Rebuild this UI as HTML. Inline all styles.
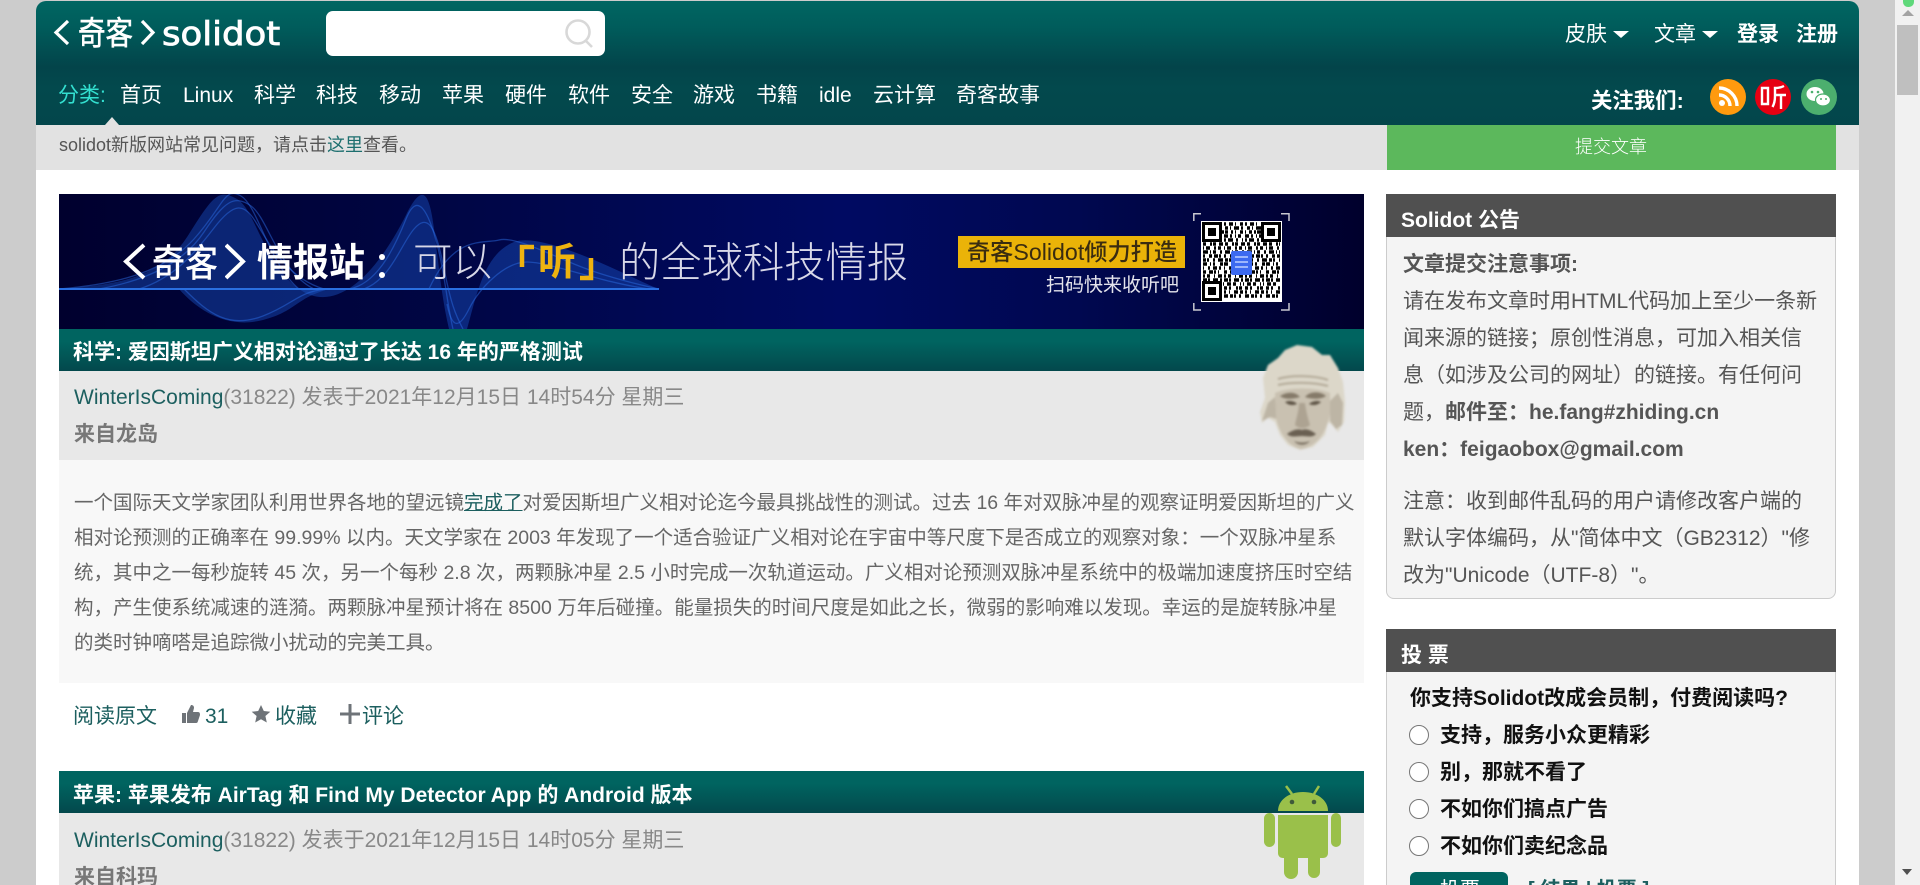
<!DOCTYPE html>
<html lang="zh-CN">
<head>
<meta charset="utf-8">
<title>solidot</title>
<style>
html,body{margin:0;padding:0;width:1920px;height:885px;overflow:hidden;background:#ccc}
body{position:relative;font-family:"Liberation Sans","Noto Sans CJK SC",sans-serif;color:#555}
.a{position:absolute}
.t{position:absolute;white-space:nowrap;line-height:30px;height:30px}
.w{color:#fff}.b{font-weight:bold}
.nav{font-size:21px;color:#fff;top:81px}
.ttl{font-size:21px;font-weight:bold;color:#fff;left:73px}
.meta{font-size:21px;color:#888;left:74px}
.meta span{color:#1c5f5f}
.src{font-size:21px;font-weight:bold;color:#777;left:74px}
.art{font-size:19.5px;color:#666;left:74px}
.art u{color:#1c5f5f}
.ac{font-size:21px;color:#1c5f5f;top:702px}
.r{font-size:21px;color:#555;left:1403px}
.v{font-size:21px;font-weight:bold;color:#111}
.radio{position:absolute;left:1410px;width:18px;height:18px;border:1px solid #767676;border-radius:50%;background:#fff}
.bar{background:linear-gradient(#006460 0,#006460 30%,#03484c 100%)}
</style>
</head>
<body>
<!-- page wrap -->
<div class="a" style="left:36px;top:170px;width:1823px;height:715px;background:#fff"></div>
<!-- scrollbar -->
<div class="a" style="left:1895px;top:0;width:25px;height:885px;background:#f1f1f1"></div>
<div class="a" style="left:1897px;top:25px;width:21px;height:70px;background:#bfbfbf"></div>
<div class="a" style="left:1903px;top:0;width:11px;height:7px;background:#5fd87a;border-radius:0 0 5px 5px"></div>
<div class="a" style="left:1902px;top:10px;width:0;height:0;border-left:6px solid transparent;border-right:6px solid transparent;border-bottom:6px solid #a3a3a3"></div>
<div class="a" style="left:1902px;top:869px;width:0;height:0;border-left:5px solid transparent;border-right:5px solid transparent;border-top:6px solid #505050"></div>

<!-- header -->
<div class="a" style="left:36px;top:1px;width:1823px;height:66px;border-radius:10px 10px 0 0;background:linear-gradient(#006662 0,#005c5b 40%,#03444a 100%)"></div>
<div class="a" style="left:36px;top:67px;width:1823px;height:58px;background:linear-gradient(#03444a 0,#03494d 35%,#03464b 100%)"></div>

<!-- logo -->
<svg class="a" style="left:50px;top:5px" width="240" height="55" fill="none" stroke="#fff" stroke-width="3.200"><path d="M18 16L6 27.500 18 39"/><path d="M92 16L103 27.500 92 39"/></svg>
<div class="t w" style="left:78px;top:14px;font-size:27.500px;line-height:40px;height:40px;-webkit-text-stroke:.5px #fff;transform:scaleY(1.18);transform-origin:left center">奇客</div>
<div class="t w" style="left:162px;top:13px;font-size:35.500px;line-height:44px;height:44px;font-family:'DejaVu Sans','Liberation Sans',sans-serif;-webkit-text-stroke:.9px #fff;transform:scaleY(.92);transform-origin:left center">solidot</div>

<!-- search -->
<div class="a" style="left:326px;top:11px;width:279px;height:45px;background:#fff;border-radius:7px"></div>
<svg class="a" style="left:562px;top:18px" width="34" height="32" fill="none" stroke="#d8d8d8" stroke-width="2.600"><circle cx="16" cy="14" r="11.500"/><path d="M24 23l6 6"/></svg>

<!-- top right -->
<div class="t w" style="left:1565px;top:20px;font-size:21px">皮肤</div>
<div class="a" style="left:1613px;top:31px;width:0;height:0;border-left:8px solid transparent;border-right:8px solid transparent;border-top:7px solid #fff"></div>
<div class="t w" style="left:1654px;top:20px;font-size:21px">文章</div>
<div class="a" style="left:1702px;top:31px;width:0;height:0;border-left:8px solid transparent;border-right:8px solid transparent;border-top:7px solid #fff"></div>
<div class="t w b" style="left:1737px;top:20px;font-size:21px">登录</div>
<div class="t w b" style="left:1796px;top:20px;font-size:21px">注册</div>

<!-- nav -->
<div class="t nav" style="left:58px;color:#33e0d0">分类:</div>
<div class="t nav" style="left:120px">首页</div>
<div class="t nav" style="left:183px">Linux</div>
<div class="t nav" style="left:254px">科学</div>
<div class="t nav" style="left:316px">科技</div>
<div class="t nav" style="left:379px">移动</div>
<div class="t nav" style="left:442px">苹果</div>
<div class="t nav" style="left:505px">硬件</div>
<div class="t nav" style="left:568px">软件</div>
<div class="t nav" style="left:631px">安全</div>
<div class="t nav" style="left:693px">游戏</div>
<div class="t nav" style="left:756px">书籍</div>
<div class="t nav" style="left:819px">idle</div>
<div class="t nav" style="left:873px">云计算</div>
<div class="t nav" style="left:956px">奇客故事</div>
<div class="a" style="left:105px;top:117px;width:0;height:0;border-left:7px solid transparent;border-right:7px solid transparent;border-bottom:8px solid #e2e2e2"></div>

<div class="t w b" style="left:1591px;top:86px;font-size:21.400px">关注我们:</div>
<svg class="a" style="left:1708px;top:77px" width="130" height="40">
<circle cx="20" cy="20" r="18" fill="#ff9a0e"/>
<g fill="none" stroke="#fff" stroke-width="3.400"><path d="M11 11a18 18 0 0 1 18 18"/><path d="M11 18a11 11 0 0 1 11 11"/></g><circle cx="14" cy="26" r="3" fill="#fff"/>
<circle cx="65" cy="20" r="18" fill="#e60012"/>
<g fill="none" stroke="#fff" stroke-width="2.400"><path d="M54 11h6v16h-6z"/><path d="M76 9c-3 1.600-7 2-9 2v8c0 4-.8 8-2.500 11"/><path d="M67 18h11M73 18v14"/></g>
<circle cx="111" cy="20" r="18" fill="#4caf6e"/>
<ellipse cx="107" cy="17" rx="8.500" ry="7" fill="#fff"/><ellipse cx="115" cy="23" rx="7.500" ry="6" fill="#fff" stroke="#4caf6e" stroke-width="1.200"/>
<circle cx="104" cy="15" r="1.300" fill="#4caf6e"/><circle cx="110" cy="15" r="1.300" fill="#4caf6e"/>
<circle cx="113" cy="22" r="1" fill="#4caf6e"/><circle cx="118" cy="22" r="1" fill="#4caf6e"/>
</svg>

<!-- notice -->
<div class="a" style="left:36px;top:125px;width:1823px;height:45px;background:#e2e2e2"></div>
<div class="t" style="left:59px;top:130px;font-size:18px;color:#555">solidot新版网站常见问题&#65292;请点击<span style="color:#1c6e6e">这里</span>查看。</div>
<div class="a" style="left:1387px;top:125px;width:449px;height:45px;background:#5cb85c"></div>
<div class="t w" style="left:1575px;top:132px;font-size:18px;font-weight:300">提交文章</div>

<!-- banner -->
<div class="a" style="left:59px;top:194px;width:1305px;height:135px;overflow:hidden;background:linear-gradient(90deg,#00002e 0,#000540 25%,#000a62 60%,#000850 78%,#00002c 100%)">
<svg class="a" style="left:0;top:0" width="1305" height="135" fill="none">
<g fill="#1a55c8" fill-opacity=".42">
<path d="M0 95C70 90 105 80 130 40S160 -5 178 5 205 70 240 95 315 85 347 21 372 60 390 135H408C418 100 425 60 455 48S580 88 600 95Z"/>
<path d="M120 95C140 118 170 135 204 126S235 105 270 95Z"/>
</g>
<g stroke="#2a6ae0" stroke-opacity=".5" stroke-width="1.300">
<path d="M0 95C60 90 105 78 135 45S165 -8 182 2 210 70 240 95"/>
<path d="M40 95C90 86 125 68 145 38S175 0 192 12 220 78 255 95"/>
<path d="M80 95C115 84 135 60 155 34S185 8 198 30 230 85 265 95"/>
<path d="M125 95C150 120 170 135 204 122S240 95 275 95"/>
<path d="M290 95C318 90 335 55 347 25S370 20 378 50 388 110 394 135"/>
<path d="M305 95C332 85 342 50 355 35S376 30 384 70 396 120 404 135"/>
<path d="M370 95C395 40 425 50 440 46S490 60 520 72 590 93 600 95"/>
<path d="M388 110C393 135 400 135 410 115S445 68 468 68 540 88 590 95"/>
</g>
<path d="M0 95H600" stroke="#2a6fe0" stroke-width="2"/>
</svg>
</div>
<svg class="a" style="left:59px;top:194px" width="120" height="135" fill="none" stroke="#fff" stroke-width="4"><path d="M85 51L67 67.500 85 84"/></svg>
<div class="t w" style="left:152px;top:239px;font-size:33px;font-weight:500;line-height:50px;height:50px;transform:scaleY(1.15);transform-origin:left center">奇客</div>
<svg class="a" style="left:225px;top:230px" width="30" height="60" fill="none" stroke="#fff" stroke-width="4"><path d="M1 15L18 31.500 1 48"/></svg>
<div class="t w b" style="left:257px;top:238px;font-size:36px;line-height:50px;height:50px;transform:scaleY(1.08);transform-origin:left center">情报站</div>
<div class="a" style="left:379px;top:254px;width:6px;height:6px;border-radius:50%;background:#fff"></div>
<div class="a" style="left:379px;top:272px;width:6px;height:6px;border-radius:50%;background:#fff"></div>
<div class="t" style="left:413px;top:236px;font-size:39.500px;color:#d8d8e8;font-weight:300;line-height:54px;height:54px">可以</div>
<svg class="a" style="left:515px;top:240px" width="84" height="45" fill="none" stroke="#eeb310" stroke-width="4.500"><path d="M19 7H7V27"/><path d="M76 18V38H65"/></svg>
<div class="t b" style="left:538px;top:236px;font-size:38px;color:#eeb310;line-height:54px;height:54px">听</div>
<div class="t" style="left:619px;top:236px;font-size:41.300px;color:#d8d8e8;font-weight:300;line-height:54px;height:54px">的全球科技情报</div>
<div class="a" style="left:958px;top:236px;width:227px;height:32px;background:#eab308"></div>
<div class="t" style="left:967px;top:236px;font-size:23.200px;color:#3a2c10;font-weight:500;line-height:32px;height:32px">奇客Solidot倾力打造</div>
<div class="t" style="left:1046px;top:271px;font-size:19px;color:#e4e4ec">扫码快来收听吧</div>
<!-- QR -->
<svg class="a" style="left:1193px;top:213px" width="97" height="98" fill="none">
<g stroke="#c8c8d0" stroke-width="1.500"><path d="M.8 8V.8H8M88 .8H96V8M.8 90V97H8M88 97H96V90"/></g>
<rect x="8" y="8" width="81" height="81" fill="#fff"/>
<g stroke="#000" stroke-width="3.500">
<path stroke-dasharray="2 3 4 2 1 4 3 2" d="M10 11H87"/>
<path stroke-dasharray="3 2 1 3 5 2 2 4" d="M10 15H87"/>
<path stroke-dasharray="1 3 3 2 2 1 4 3 2" d="M10 19H87"/>
<path stroke-dasharray="4 2 2 3 1 2 3 4" d="M10 23H87"/>
<path stroke-dasharray="2 2 5 3 2 4 1 2" d="M10 27H87"/>
<path stroke-dasharray="3 4 2 1 3 3 4 2" d="M10 31H87"/>
<path stroke-dasharray="1 2 4 4 2 2 3 3" d="M10 35H87"/>
<path stroke-dasharray="5 2 1 2 3 4 2 3" d="M10 39H87"/>
<path stroke-dasharray="2 4 3 2 4 1 2 3" d="M10 43H87"/>
<path stroke-dasharray="3 1 2 4 2 3 5 2" d="M10 47H87"/>
<path stroke-dasharray="4 3 1 2 2 5 3 1" d="M10 51H87"/>
<path stroke-dasharray="1 4 2 3 4 2 2 3" d="M10 55H87"/>
<path stroke-dasharray="3 3 4 1 2 2 1 5" d="M10 59H87"/>
<path stroke-dasharray="2 2 3 4 1 3 4 2" d="M10 63H87"/>
<path stroke-dasharray="4 1 2 3 5 2 2 2" d="M10 67H87"/>
<path stroke-dasharray="1 3 4 2 3 4 1 2" d="M10 71H87"/>
<path stroke-dasharray="3 2 2 5 2 1 3 3" d="M10 75H87"/>
<path stroke-dasharray="2 3 1 4 4 2 3 2" d="M10 79H87"/>
<path stroke-dasharray="4 2 3 1 2 3 2 4" d="M10 83H87"/>
</g>
<g>
<rect x="9" y="9" width="20" height="20" fill="#fff"/><rect x="10.500" y="10.500" width="17" height="17" fill="none" stroke="#000" stroke-width="3"/><rect x="15" y="15" width="8" height="8" fill="#000"/>
<rect x="68" y="9" width="20" height="20" fill="#fff"/><rect x="69.500" y="10.500" width="17" height="17" fill="none" stroke="#000" stroke-width="3"/><rect x="74" y="15" width="8" height="8" fill="#000"/>
<rect x="9" y="68" width="20" height="20" fill="#fff"/><rect x="10.500" y="69.500" width="17" height="17" fill="none" stroke="#000" stroke-width="3"/><rect x="15" y="74" width="8" height="8" fill="#000"/>
<rect x="38" y="38" width="21" height="24" rx="2" fill="#3c6af0"/><path d="M42 44h13M42 49h13M42 54h13" stroke="#bcd0ff" stroke-width="1.500"/>
</g>
</svg>

<!-- article 1 -->
<div class="a bar" style="left:59px;top:329px;width:1305px;height:42px"></div>
<div class="t ttl" style="top:338px">科学: 爱因斯坦广义相对论通过了长达 16 年的严格测试</div>
<div class="a" style="left:59px;top:371px;width:1305px;height:89px;background:#e8e8e8"></div>
<div class="t meta" style="top:383px"><span>WinterIsComing</span>(31822) 发表于2021年12月15日 14时54分 星期三</div>
<div class="t src" style="top:420px">来自龙岛</div>
<svg class="a" style="left:1258px;top:341px" width="92" height="115">
<g style="filter:blur(1px)">
<path fill="#dcd7c9" d="M39 4L54 6 64 14 72 14 80 27 85 41 87 61 86 81 80 91 74 84 70 81 67 94 55 106 42 109 30 104 22 94 17 81 10 77 4 82 2 71 7 57 5 37 10 24 20 17 27 9Z"/>
<path fill="#a99f8e" d="M4 80L10 62 17 56 19 78 12 76ZM72 60L80 52 85 62 84 84 78 88 72 80Z" opacity=".6"/>
<path fill="#c9c1b1" d="M17 52C30 46 58 46 72 52L72 72C70 88 60 106 43 108 30 106 20 90 18 76Z"/>
<path d="M20 38C32 34 56 34 70 39M20 44C32 41 56 41 70 45" stroke="#b3aa98" stroke-width="2" fill="none"/>
<path fill="#857a69" d="M22 55C30 50 38 51 42 56 35 58 27 59 22 55ZM47 56C52 50 62 50 68 55 62 59 53 58 47 56Z"/>
<path fill="#5e5446" d="M27 61C31 59 37 60 39 63 34 65 30 64 27 61ZM51 63C54 60 60 59 63 61 60 64 55 65 51 63Z"/>
<path fill="#958a78" d="M41 62C41 70 38 78 37 84 41 88 48 88 52 84 50 78 48 70 47 62Z" opacity=".55"/>
<path fill="#6a6052" d="M29 93C33 90 39 87 44 89 49 87 54 90 58 93 54 97 49 95 44 95 39 95 33 97 29 93Z"/>
<path fill="#7d7364" d="M36 100C41 102 47 102 52 100 48 105 40 105 36 100Z"/>
</g>
</svg>
<div class="a" style="left:59px;top:460px;width:1305px;height:223px;background:#f8f8f8"></div>
<div class="t art" style="top:488px">一个国际天文学家团队利用世界各地的望远镜<u>完成了</u>对爱因斯坦广义相对论迄今最具挑战性的测试。过去 16 年对双脉冲星的观察证明爱因斯坦的广义</div>
<div class="t art" style="top:523px">相对论预测的正确率在 99.99% 以内。天文学家在 2003 年发现了一个适合验证广义相对论在宇宙中等尺度下是否成立的观察对象&#65306;一个双脉冲星系</div>
<div class="t art" style="top:558px">统&#65292;其中之一每秒旋转 45 次&#65292;另一个每秒 2.8 次&#65292;两颗脉冲星 2.5 小时完成一次轨道运动。广义相对论预测双脉冲星系统中的极端加速度挤压时空结</div>
<div class="t art" style="top:593px">构&#65292;产生使系统减速的涟漪。两颗脉冲星预计将在 8500 万年后碰撞。能量损失的时间尺度是如此之长&#65292;微弱的影响难以发现。幸运的是旋转脉冲星</div>
<div class="t art" style="top:628px">的类时钟嘀嗒是追踪微小扰动的完美工具。</div>

<!-- actions -->
<div class="t ac" style="left:73px">阅读原文</div>
<svg class="a" style="left:181px;top:704px" width="20" height="20" fill="#6e7378"><path d="M1 9h4v10H1zM6 9l4-8c2 0 3 1 3 3l-1 4h5c2 0 2 2 2 3l-2 6c-.5 2-1 2-3 2H6z"/></svg>
<div class="t ac" style="left:205px">31</div>
<svg class="a" style="left:251px;top:704px" width="20" height="20" fill="#6e7378"><path d="M10 1l2.800 6 6.500.7-4.900 4.300 1.400 6.500L10 15.200 4.200 18.500l1.400-6.500L.7 7.700 7.200 7z"/></svg>
<div class="t ac" style="left:275px">收藏</div>
<svg class="a" style="left:340px;top:704px" width="20" height="20" fill="#6e7378"><path d="M8.500 0h3v8.500H20v3h-8.500V20h-3v-8.500H0v-3h8.500z"/></svg>
<div class="t ac" style="left:362px">评论</div>

<!-- article 2 -->
<div class="a bar" style="left:59px;top:771px;width:1305px;height:42px"></div>
<div class="t ttl" style="top:781px">苹果: 苹果发布 AirTag 和 Find My Detector App 的 Android 版本</div>
<div class="a" style="left:59px;top:813px;width:1305px;height:72px;background:#e8e8e8"></div>
<div class="t meta" style="top:826px"><span>WinterIsComing</span>(31822) 发表于2021年12月15日 14时05分 星期三</div>
<div class="t src" style="top:863px">来自科玛</div>
<svg class="a" style="left:1262px;top:785px" width="82" height="94" fill="#9ac04a">
<path d="M24 1l6 8M57 1l-5 8" stroke="#9ac04a" stroke-width="2.500"/>
<path d="M16 26c0-11 11-19 25-19s25 8 25 19z"/>
<circle cx="30" cy="17" r="2.300" fill="#3f5a3a"/><circle cx="52" cy="17" r="2.300" fill="#3f5a3a"/>
<path d="M16 30h50v38c0 3-2 5-5 5h-3v14a6 6 0 0 1-12 0V73H36v14a7 7 0 0 1-14 0V73h-1c-3 0-5-2-5-5z"/>
<rect x="2" y="28" width="11" height="34" rx="5.500"/><rect x="69" y="28" width="10" height="34" rx="5"/>
</svg>

<!-- sidebar box 1 -->
<div class="a" style="left:1386px;top:194px;width:448px;height:403px;background:#f4f4f4;border:1px solid #ccc;border-radius:0 0 8px 8px"></div>
<div class="a" style="left:1386px;top:194px;width:450px;height:43px;background:#505050"></div>
<div class="t w b" style="left:1401px;top:206px;font-size:21px">Solidot 公告</div>
<div class="t r b" style="top:250px">文章提交注意事项:</div>
<div class="t r" style="top:287px">请在发布文章时用HTML代码加上至少一条新</div>
<div class="t r" style="top:324px">闻来源的链接&#65307;原创性消息&#65292;可加入相关信</div>
<div class="t r" style="top:361px">息&#65288;如涉及公司的网址&#65289;的链接。有任何问</div>
<div class="t r" style="top:398px">题&#65292;<b>邮件至&#65306;he.fang#zhiding.cn</b></div>
<div class="t r b" style="top:435px">ken&#65306;feigaobox@gmail.com</div>
<div class="t r" style="top:487px">注意&#65306;收到邮件乱码的用户请修改客户端的</div>
<div class="t r" style="top:524px">默认字体编码&#65292;从"简体中文&#65288;GB2312&#65289;"修</div>
<div class="t r" style="top:561px">改为"Unicode&#65288;UTF-8&#65289;"。</div>

<!-- sidebar box 2 -->
<div class="a" style="left:1386px;top:629px;width:448px;height:260px;background:#f4f4f4;border:1px solid #ccc"></div>
<div class="a" style="left:1386px;top:629px;width:450px;height:43px;background:#505050"></div>
<div class="t w b" style="left:1401px;top:641px;font-size:21px">投 票</div>
<div class="t v" style="left:1410px;top:684px">你支持Solidot改成会员制&#65292;付费阅读吗?</div>
<div class="radio" style="top:725px;left:1409px"></div><div class="t v" style="left:1440px;top:721px">支持&#65292;服务小众更精彩</div>
<div class="radio" style="top:762px;left:1409px"></div><div class="t v" style="left:1440px;top:758px">别&#65292;那就不看了</div>
<div class="radio" style="top:799px;left:1409px"></div><div class="t v" style="left:1440px;top:795px">不如你们搞点广告</div>
<div class="radio" style="top:836px;left:1409px"></div><div class="t v" style="left:1440px;top:832px">不如你们卖纪念品</div>
<div class="a" style="left:1410px;top:872px;width:98px;height:40px;background:#006460;border-radius:6px"></div>
<div class="t w" style="left:1440px;top:875px;font-size:20px">投票</div>
<div class="t" style="left:1528px;top:875px;font-size:20px;color:#1c5f5f;font-weight:bold">[ 结果 | 投票 ]</div>
</body>
</html>
